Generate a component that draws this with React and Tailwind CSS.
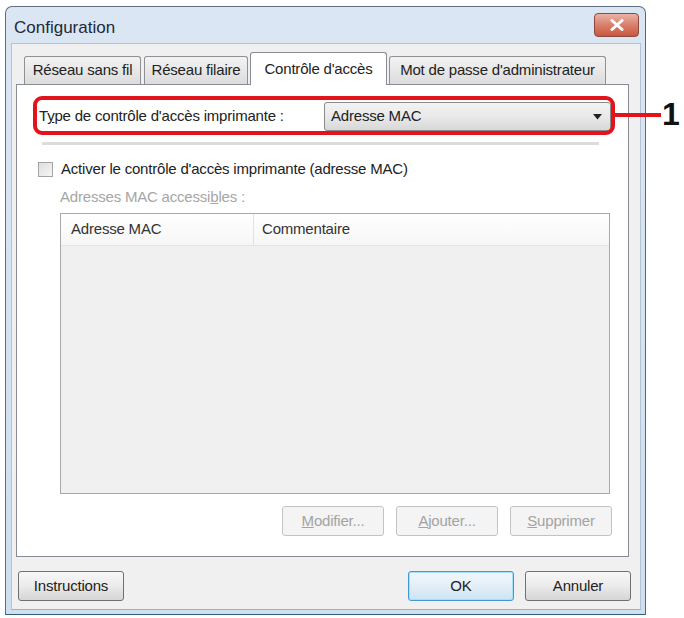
import React from 'react';

const btn =
  'flex items-center justify-center h-[30px] rounded-[3px] border text-[15px] tracking-[-0.2px]';
const btnNormal = `${btn} border-[#707070] bg-gradient-to-b from-[#f7f7f7] via-[#ebebeb] to-[#d5d5d5] text-[#222]`;
const btnDisabled = `${btn} border-[#c3c3c3] bg-[#f4f4f4] text-[#a3a3a3]`;

function Tab({ label, width, active }) {
  if (active) {
    return (
      <div
        className={`relative z-10 -mb-px flex h-[33px] items-center justify-center rounded-t-[3px] border border-b-0 border-[#898c95] bg-white text-[15px] text-[#222] tracking-[-0.2px] ${width}`}
      >
        {label}
      </div>
    );
  }
  return (
    <div
      className={`flex h-[28px] items-center justify-center rounded-t-[3px] border border-b-0 border-[#8e9096] bg-gradient-to-b from-[#f3f3f3] to-[#dcdcdc] text-[15px] text-[#222] tracking-[-0.2px] ${width}`}
    >
      {label}
    </div>
  );
}

export default function App() {
  return (
    <div className="relative h-[618px] w-[684px] overflow-hidden bg-white pl-[5px] pt-[6px] font-['Liberation_Sans',Arial,sans-serif]">
      {/* window */}
      <div className="flex h-[609px] w-[641px] flex-col rounded-t-[7px] border border-[#5e6e80] border-b-[#2f5f7a] border-r-[#3f6f8a] bg-gradient-to-b from-[#dbe6f3] to-[#cfdff0]">
        <div className="flex h-[36px] items-start justify-between pl-[8px] pr-[6px]">
          <span className="mt-[8px] text-[17px] text-[#1d2a3a]">Configuration</span>
          <div className="mt-[6px] flex h-[24px] w-[45px] items-center justify-center rounded-[4px] border border-[#8a4a3e] bg-gradient-to-b from-[#eab3a6] via-[#d8806c] to-[#c8563f]">
            <svg width="14" height="12" viewBox="0 0 14 12">
              <path d="M2 1.5 L12 10.5 M12 1.5 L2 10.5" stroke="#fff" strokeWidth="3" strokeLinecap="round" />
            </svg>
          </div>
        </div>

        {/* client area */}
        <div className="mb-[4px] ml-[5px] mr-[4px] flex flex-1 flex-col border border-[#b5c4d4] border-b-[#6fc3de] bg-[#f0f0f0] pl-[4px] pr-[11px] pt-[8px]">
          <div className="flex h-[32px] items-end pl-[8px]">
            <Tab label="Réseau sans fil" width="w-[117px]" />
            <div className="ml-[3px]">
              <Tab label="Réseau filaire" width="w-[104px]" />
            </div>
            <div className="ml-[2px]">
              <Tab label="Contrôle d'accès" width="w-[137px]" active />
            </div>
            <div className="ml-[2px]">
              <Tab label="Mot de passe d'administrateur" width="w-[217px]" />
            </div>
          </div>

          {/* tab panel */}
          <div className="flex h-[473px] flex-col border border-[#898c95] bg-white">
            <div className="ml-[22px] mt-[17px] flex h-[29px] items-center">
              <span className="w-[285px] text-[15px] text-[#222] tracking-[-0.2px]">
                T<span className="underline">y</span>pe de contrôle d'accès imprimante :
              </span>
              <div className="flex h-[29px] w-[287px] items-center justify-between rounded-[3px] border border-[#8a8a8a] bg-gradient-to-b from-[#f3f3f3] via-[#e9e9e9] to-[#d8d8d8] pl-[6px] pr-[8px] text-[15px] text-[#222] tracking-[-0.2px]">
                <span>Adresse MAC</span>
                <svg width="9" height="6" viewBox="0 0 9 6">
                  <path d="M0 0 H9 L4.5 5.5 Z" fill="#222" />
                </svg>
              </div>
            </div>

            <div className="ml-[25px] mt-[11px] h-[3px] w-[557px] bg-[#dcdcdc]" />

            <label className="ml-[21px] mt-[13px] flex items-center gap-[8px]">
              <span className="h-[15px] w-[15px] border border-[#a3a3a3] bg-gradient-to-br from-[#dedede] to-[#f6f6f6]" />
              <span className="text-[15px] text-[#222] tracking-[-0.2px]">
                Activer le contrôle d'accès imprimante (adresse MAC)
              </span>
            </label>

            <div className="ml-[43px] mt-[5px] text-[15px] text-[#a6a6a6] tracking-[-0.2px]">
              Adresses MAC accessi<span className="underline">b</span>les :
            </div>

            <div className="ml-[43px] mt-[5px] flex h-[281px] w-[550px] flex-col border border-[#a9a9a9] bg-[#f0f0f0]">
              <div className="flex h-[32px] border-b border-[#e4e4e4] bg-gradient-to-b from-[#ffffff] to-[#f6f6f6] text-[15px] text-[#333] tracking-[-0.2px]">
                <div className="flex w-[193px] items-center border-r border-[#e2e2e2] pl-[10px]">Adresse MAC</div>
                <div className="flex items-center pl-[8px]">Commentaire</div>
              </div>
            </div>

            <div className="mt-[12px] flex justify-end gap-[12px] pr-[16px]">
              <div className={`${btnDisabled} w-[102px]`}>
                <span>
                  <span className="underline">M</span>odifier...
                </span>
              </div>
              <div className={`${btnDisabled} w-[102px]`}>
                <span>
                  <span className="underline">A</span>jouter...
                </span>
              </div>
              <div className={`${btnDisabled} w-[102px]`}>
                <span>
                  <span className="underline">S</span>upprimer
                </span>
              </div>
            </div>
          </div>

          {/* dialog buttons */}
          <div className="mr-[-2px] mt-[14px] flex items-center">
            <div className={`${btnNormal} ml-[2px] w-[106px]`}>Instructions</div>
            <div className="flex-1" />
            <div className={`${btn} w-[106px] border-[#3c9ad6] bg-gradient-to-b from-[#f0f7fc] via-[#e3eff8] to-[#cfe3f2] text-[#222] shadow-[inset_0_0_0_1px_#a8e0f8]`}>
              OK
            </div>
            <div className={`${btnNormal} ml-[11px] w-[106px]`}>Annuler</div>
          </div>
        </div>
      </div>

      {/* annotation overlay */}
      <div className="absolute left-[33px] top-[96px] h-[39px] w-[582px] rounded-[9px] border-[4px] border-[#e3131b]" />
      <div className="absolute left-[614px] top-[113px] h-[4px] w-[47px] bg-[#e3131b]" />
      <div className="absolute left-[662px] top-[98px] text-[32px] font-bold leading-none text-[#111]">1</div>
    </div>
  );
}
